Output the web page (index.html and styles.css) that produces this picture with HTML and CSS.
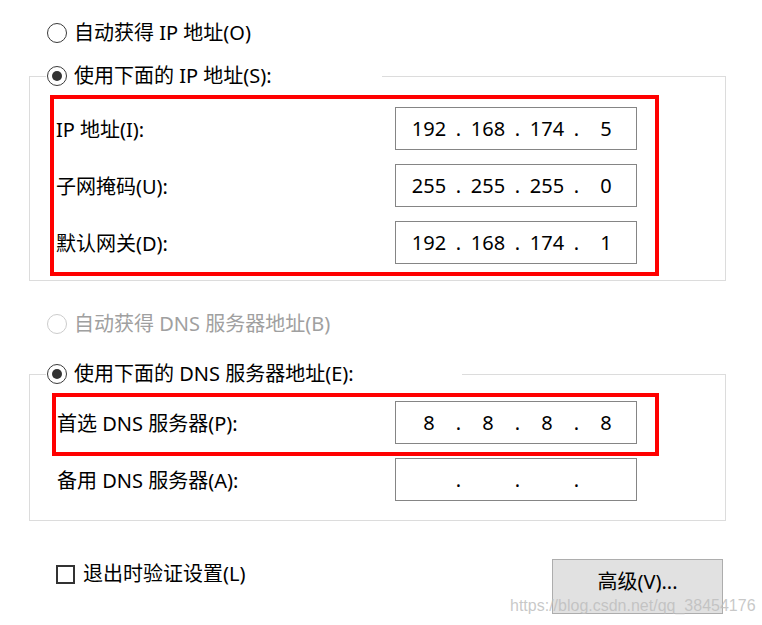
FILE: index.html
```html
<!DOCTYPE html>
<html lang="zh-CN">
<head>
<meta charset="utf-8">
<title>IP 设置</title>
<link rel="stylesheet" href="styles.css">
</head>
<body>
<div class="dialog">
  <div class="radio-row"><span class="radio"></span><span>自动获得 IP 地址(O)</span></div>

  <fieldset class="group group-ip">
    <legend class="legend legend-ip"><span class="radio checked"></span><span>使用下面的 IP 地址(S):</span></legend>
    <div class="highlight hl-ip">
      <div class="field-row">
        <span class="label">IP 地址(I):</span>
        <div class="ip-box"><span class="seg">192</span><span class="dot">.</span><span class="seg">168</span><span class="dot">.</span><span class="seg">174</span><span class="dot">.</span><span class="seg">5</span></div>
      </div>
      <div class="field-row">
        <span class="label">子网掩码(U):</span>
        <div class="ip-box"><span class="seg">255</span><span class="dot">.</span><span class="seg">255</span><span class="dot">.</span><span class="seg">255</span><span class="dot">.</span><span class="seg">0</span></div>
      </div>
      <div class="field-row">
        <span class="label">默认网关(D):</span>
        <div class="ip-box"><span class="seg">192</span><span class="dot">.</span><span class="seg">168</span><span class="dot">.</span><span class="seg">174</span><span class="dot">.</span><span class="seg">1</span></div>
      </div>
    </div>
  </fieldset>

  <div class="radio-row radio-row-dns disabled"><span class="radio"></span><span>自动获得 DNS 服务器地址(B)</span></div>

  <fieldset class="group group-dns">
    <legend class="legend legend-dns"><span class="radio checked"></span><span>使用下面的 DNS 服务器地址(E):</span></legend>
    <div class="highlight hl-dns">
      <div class="field-row field-row-dns">
        <span class="label">首选 DNS 服务器(P):</span>
        <div class="ip-box"><span class="seg">8</span><span class="dot">.</span><span class="seg">8</span><span class="dot">.</span><span class="seg">8</span><span class="dot">.</span><span class="seg">8</span></div>
      </div>
    </div>
    <div class="field-row field-row-alt">
      <span class="label">备用 DNS 服务器(A):</span>
      <div class="ip-box"><span class="seg"></span><span class="dot">.</span><span class="seg"></span><span class="dot">.</span><span class="seg"></span><span class="dot">.</span><span class="seg"></span></div>
    </div>
  </fieldset>

  <div class="footer">
    <div class="check-row"><span class="checkbox"></span><span>退出时验证设置(L)</span></div>
    <button class="btn" type="button"><span class="btn-text">高级(V)...</span></button>
  </div>

  <div class="watermark">https://blog.csdn.net/qq_38454176</div>
</div>
</body>
</html>
```

FILE: styles.css
```css
* { box-sizing: border-box; }

html, body {
  margin: 0;
  padding: 0;
  background: #ffffff;
}

body {
  font-family: "Noto Sans", "Noto Sans CJK SC", sans-serif;
  font-size: 20px;
  color: #000000;
  width: 762px;
  height: 625px;
  overflow: hidden;
}

.dialog {
  position: relative;
  padding: 20px 0 0 29px;
  width: 726px;
  height: 625px;
}

.radio-row {
  display: flex;
  align-items: center;
  height: 26px;
  line-height: 26px;
  padding-left: 18px;
  gap: 7px;
  white-space: nowrap;
}

.radio-row-dns {
  margin-top: 30px;
}

.disabled {
  color: #a0a0a0;
}

.radio {
  flex: none;
  width: 20px;
  height: 20px;
  border: 1.8px solid #3a3a3a;
  border-radius: 50%;
  background: #ffffff;
  display: inline-flex;
  align-items: center;
  justify-content: center;
}

.disabled .radio {
  border-color: #cccccc;
}

.radio.checked::after {
  content: "";
  width: 10px;
  height: 10px;
  border-radius: 50%;
  background: #333333;
}

.group {
  margin: 0;
  padding: 0;
  border: 1px solid #dcdcdc;
  width: 697px;
  min-width: 0;
}

.group-ip {
  margin-top: 17px;
  padding-bottom: 4px;
}

.group-dns {
  margin-top: 24px;
  padding-bottom: 19px;
}

.legend {
  margin-left: 16px;
  padding: 0;
  height: 26px;
  line-height: 26px;
  display: flex;
  align-items: center;
  gap: 7px;
  white-space: nowrap;
}

.legend .radio {
  margin-left: 1px;
}

.legend-ip { width: 336px; }
.legend-dns { width: 416px; }

.highlight {
  border: 4px solid #ff0000;
}

.hl-ip {
  margin: 6px 0 0 20px;
  width: 609px;
  padding: 8px 0 8px 2px;
  display: flex;
  flex-direction: column;
  gap: 14px;
}

.hl-dns {
  margin: 6px 0 0 22px;
  width: 607px;
  padding: 4px 0 8px 1px;
}

.field-row {
  display: grid;
  grid-template-columns: 339px 242px;
  align-items: center;
  height: 43px;
  white-space: nowrap;
}

.field-row-dns {
  grid-template-columns: 338px 242px;
}

.field-row-alt {
  margin-top: 2px;
  padding-left: 27px;
  grid-template-columns: 338px 242px;
}

.ip-box {
  width: 242px;
  height: 43px;
  border: 1px solid #858585;
  background: #ffffff;
  display: flex;
  align-items: center;
  padding-left: 12px;
}

.seg {
  width: 42px;
  text-align: center;
}

.dot {
  width: 17px;
  text-align: center;
}

.footer {
  margin-top: 38px;
  width: 697px;
  padding: 0 3px 0 27px;
  display: flex;
  justify-content: space-between;
  align-items: flex-start;
}

.check-row {
  margin-top: 2px;
  display: flex;
  align-items: center;
  gap: 8px;
  height: 26px;
  line-height: 26px;
  white-space: nowrap;
}

.checkbox {
  flex: none;
  width: 19px;
  height: 19px;
  border: 2px solid #333333;
  background: #ffffff;
}

.btn {
  width: 171px;
  height: 55px;
  background: #e1e1e1;
  border: 1px solid #adadad;
  border-radius: 0;
  font-family: "Noto Sans", "Noto Sans CJK SC", sans-serif;
  font-size: 20px;
  line-height: 22px;
  color: #000000;
  padding: 0 0 10px 0;
  display: flex;
  align-items: center;
  justify-content: center;
}

.btn-text {
  line-height: 22px;
}

.watermark {
  position: absolute;
  left: 510px;
  top: 597px;
  font-family: "Liberation Sans", Arial, sans-serif;
  font-size: 16px;
  line-height: 17px;
  color: rgba(190, 190, 190, 0.85);
  white-space: nowrap;
}
```
